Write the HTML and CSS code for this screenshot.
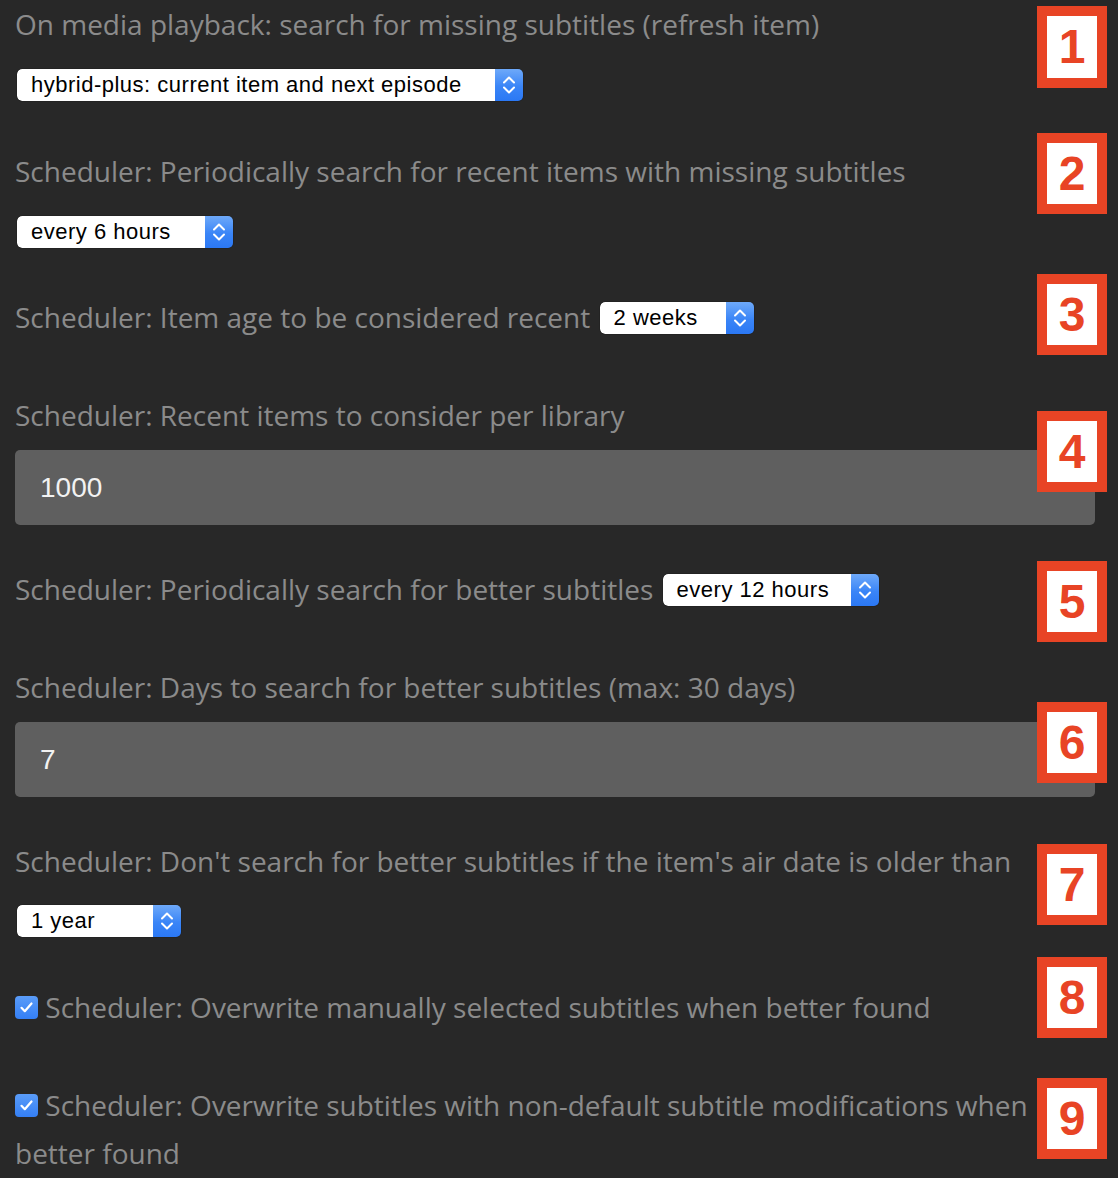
FILE: index.html
```html
<!DOCTYPE html>
<html lang="en">
<head>
<meta charset="utf-8">
<title>Subtitle scheduler settings</title>
<link rel="stylesheet" href="styles.css">
</head>
<body>
<div class="page">
  <div class="group stack first">
    <label class="label">On media playback: search for missing subtitles (refresh item)</label>
    <span class="select w-hybrid"><select><option>hybrid-plus: current item and next episode</option></select><span class="stepper"><svg width="28" height="32" viewBox="0 0 28 32"><path d="M9 13.5 L14 8.5 L19 13.5 M9 18.5 L14 23.5 L19 18.5" fill="none" stroke="#fff" stroke-width="2" stroke-linecap="round" stroke-linejoin="round"/></svg></span></span>
  </div>

  <div class="group stack">
    <label class="label">Scheduler: Periodically search for recent items with missing subtitles</label>
    <span class="select w-hours"><select><option>every 6 hours</option></select><span class="stepper"><svg width="28" height="32" viewBox="0 0 28 32"><path d="M9 13.5 L14 8.5 L19 13.5 M9 18.5 L14 23.5 L19 18.5" fill="none" stroke="#fff" stroke-width="2" stroke-linecap="round" stroke-linejoin="round"/></svg></span></span>
  </div>

  <div class="group inline">
    <label class="label">Scheduler: Item age to be considered recent</label>
    <span class="select w-weeks"><select><option>2 weeks</option></select><span class="stepper"><svg width="28" height="32" viewBox="0 0 28 32"><path d="M9 13.5 L14 8.5 L19 13.5 M9 18.5 L14 23.5 L19 18.5" fill="none" stroke="#fff" stroke-width="2" stroke-linecap="round" stroke-linejoin="round"/></svg></span></span>
  </div>

  <div class="group field">
    <label class="label">Scheduler: Recent items to consider per library</label>
    <input class="input" type="text" value="1000">
  </div>

  <div class="group inline">
    <label class="label">Scheduler: Periodically search for better subtitles</label>
    <span class="select w-hours"><select><option>every 12 hours</option></select><span class="stepper"><svg width="28" height="32" viewBox="0 0 28 32"><path d="M9 13.5 L14 8.5 L19 13.5 M9 18.5 L14 23.5 L19 18.5" fill="none" stroke="#fff" stroke-width="2" stroke-linecap="round" stroke-linejoin="round"/></svg></span></span>
  </div>

  <div class="group field">
    <label class="label">Scheduler: Days to search for better subtitles (max: 30 days)</label>
    <input class="input" type="text" value="7">
  </div>

  <div class="group stack tight">
    <label class="label">Scheduler: Don't search for better subtitles if the item's air date is older than</label>
    <span class="select w-year"><select><option>1 year</option></select><span class="stepper"><svg width="28" height="32" viewBox="0 0 28 32"><path d="M9 13.5 L14 8.5 L19 13.5 M9 18.5 L14 23.5 L19 18.5" fill="none" stroke="#fff" stroke-width="2" stroke-linecap="round" stroke-linejoin="round"/></svg></span></span>
  </div>

  <div class="group check">
    <label class="label"><span class="checkbox"><svg width="23" height="23" viewBox="0 0 23 23"><path d="M6.5 11.8 L9.8 15.2 L16.5 7.5" fill="none" stroke="#fff" stroke-width="2.2" stroke-linecap="round" stroke-linejoin="round"/></svg></span> Scheduler: Overwrite manually selected subtitles when better found</label>
  </div>

  <div class="group check">
    <label class="label"><span class="checkbox"><svg width="23" height="23" viewBox="0 0 23 23"><path d="M6.5 11.8 L9.8 15.2 L16.5 7.5" fill="none" stroke="#fff" stroke-width="2.2" stroke-linecap="round" stroke-linejoin="round"/></svg></span> Scheduler: Overwrite subtitles with non-default subtitle modifications when better found</label>
  </div>

  <span class="badge b1">1</span>
  <span class="badge b2">2</span>
  <span class="badge b3">3</span>
  <span class="badge b4">4</span>
  <span class="badge b5">5</span>
  <span class="badge b6">6</span>
  <span class="badge b7">7</span>
  <span class="badge b8">8</span>
  <span class="badge b9">9</span>
</div>
</body>
</html>
```

FILE: styles.css
```css
html, body {
  margin: 0;
  padding: 0;
  background: #282828;
}

.page {
  position: relative;
  width: 1080px;
  padding: 0 23px 0 15px;
  min-height: 1178px;
  font-family: "Open Sans", "DejaVu Sans", sans-serif;
  font-size: 28px;
  line-height: 48px;
  color: #8b8b8b;
}

.label {
  color: #8b8b8b;
}

.group.stack {
  margin-bottom: 45px;
}
.group.stack.first {
  margin-bottom: 46px;
}
.group.stack .label {
  display: block;
  margin-bottom: 21px;
}
.group.stack.tight {
  margin-bottom: 46px;
}
.group.stack.tight .label {
  margin-bottom: 20px;
}
.group.stack .select {
  display: flex;
}

.group.inline {
  margin-bottom: 50px;
}

.group.field {
  margin-bottom: 40px;
}
.group.field .label {
  display: block;
  margin-bottom: 11px;
}

.group.check {
  margin-bottom: 50px;
}

.select {
  display: inline-flex;
  vertical-align: middle;
  height: 32px;
  margin-left: 2px;
  border-radius: 5px;
  overflow: hidden;
  box-shadow: 0 0 0 0.5px rgba(0, 0, 0, 0.25);
  position: relative;
  top: -3px;
}
.group.stack .select { top: 0; }

.select select {
  -webkit-appearance: none;
  appearance: none;
  flex: 1;
  min-width: 0;
  height: 32px;
  border: 0;
  margin: 0;
  padding: 0 0 0 14px;
  background: #fff;
  color: #000;
  font-family: "Liberation Sans", Arial, sans-serif;
  font-size: 22px;
  letter-spacing: 0.5px;
  line-height: 32px;
  border-radius: 5px 0 0 5px;
  outline: none;
}

.stepper {
  flex: none;
  width: 28px;
  height: 32px;
  background: linear-gradient(#6ea9f9, #3a85f7 55%, #2b78f4);
  display: block;
}
.stepper svg { display: block; }

.w-hybrid { width: 506px; }
.w-hours { width: 216px; }
.w-weeks { width: 154px; }
.w-year { width: 164px; }

.input {
  display: block;
  box-sizing: border-box;
  width: 1080px;
  height: 75px;
  margin: 0;
  border: 0;
  border-radius: 5px;
  background: #5f5f5f;
  color: #f2f2f2;
  padding: 0 0 0 25px;
  font-family: "Liberation Sans", Arial, sans-serif;
  font-size: 28px;
  outline: none;
}

.checkbox {
  display: inline-block;
  vertical-align: middle;
  width: 23px;
  height: 23px;
  border-radius: 4px;
  background: linear-gradient(#5a9cf8, #347ff5);
  position: relative;
  top: -3px;
}
.checkbox svg { display: block; }

.badge {
  position: absolute;
  left: 1037px;
  box-sizing: border-box;
  width: 70px;
  height: 81px;
  border: 10px solid #e84425;
  background: #fff;
  color: #e84425;
  font-family: "Liberation Sans", Arial, sans-serif;
  font-weight: bold;
  font-size: 48px;
  line-height: 61px;
  text-align: center;
}
.b1 { top: 6px; height: 82px; }
.b2 { top: 133px; }
.b3 { top: 274px; }
.b4 { top: 411px; }
.b5 { top: 561px; }
.b6 { top: 702px; }
.b7 { top: 844px; }
.b8 { top: 957px; }
.b9 { top: 1078px; }
```
